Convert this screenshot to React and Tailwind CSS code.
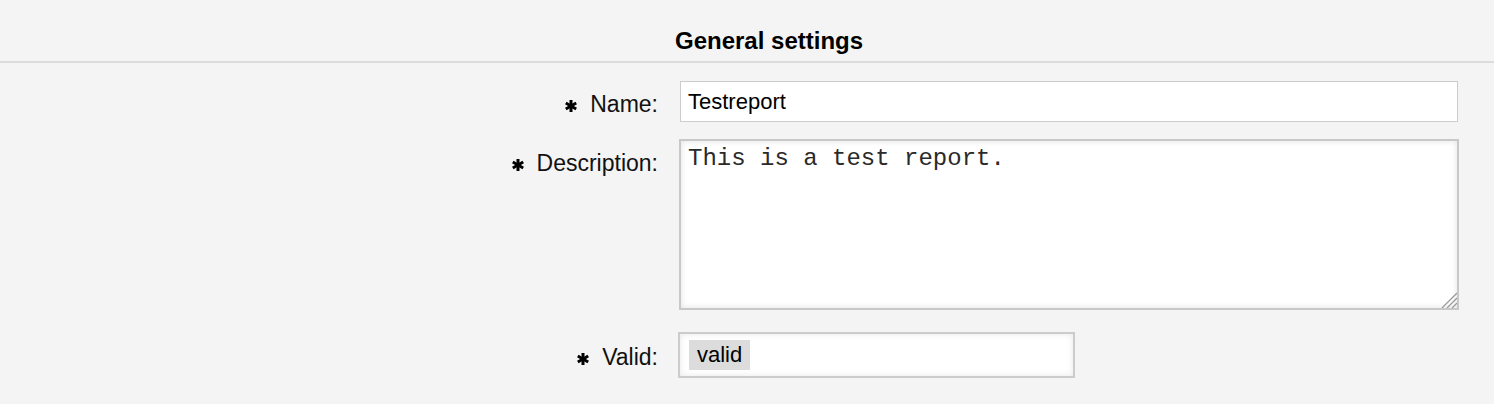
import React from 'react'

function Req() {
  return (
    <svg
      viewBox="0 0 12 12"
      className="mr-[13px] inline-block h-[12px] w-[12px] align-baseline"
      aria-hidden="true"
    >
      <g stroke="#000" strokeWidth="3" strokeLinecap="butt">
        <line x1="6" y1="0" x2="6" y2="12" />
        <line x1="0.8" y1="3" x2="11.2" y2="9" />
        <line x1="0.8" y1="9" x2="11.2" y2="3" />
      </g>
    </svg>
  )
}

function Label({ children, className = '' }) {
  return (
    <div className={`w-[658px] shrink-0 text-right text-[23px] leading-[28px] text-[#111] ${className}`}>
      <Req />
      {children}
    </div>
  )
}

function ResizeGrip() {
  return (
    <svg viewBox="0 0 18 18" className="pointer-events-none absolute bottom-[2px] right-[2px] h-[18px] w-[18px]" aria-hidden="true">
      <g stroke="#9a9a9a" strokeWidth="1.3">
        <line x1="3" y1="18" x2="18" y2="3" />
        <line x1="8" y1="18" x2="18" y2="8" />
        <line x1="13" y1="18" x2="18" y2="13" />
      </g>
    </svg>
  )
}

export default function App() {
  return (
    <div className="min-h-screen bg-[#f4f4f4] font-['Liberation_Sans',Arial,sans-serif] text-black">
      <div className="border-b-2 border-[#dcdcdc] pb-[6px] pl-[675px] pt-[27px] text-[24px] font-bold leading-[28px]">
        General settings
      </div>

      <div className="mt-[18px] flex gap-[22px]">
        <Label className="pt-[9px]">Name:</Label>
        <input
          readOnly
          value="Testreport"
          className="h-[41px] w-[778px] border border-[#cccccc] bg-white px-[7px] text-[22px] text-black outline-none"
        />
      </div>

      <div className="mt-[17px] flex gap-[21px]">
        <Label className="pt-[10px]">Description:</Label>
        <div className="relative h-[171px] w-[780px]">
          <textarea
            readOnly
            defaultValue="This is a test report."
            className="block h-full w-full resize-none border-2 border-[#c8c8c8] bg-white px-[7px] pt-[4px] font-['Liberation_Mono','Courier_New',monospace] text-[24px] leading-[28px] text-[#2a2a2a] shadow-[inset_0_0_6px_rgba(0,0,0,0.12)] outline-none"
          />
          <ResizeGrip />
        </div>
      </div>

      <div className="mt-[22px] flex gap-[20px]">
        <Label className="pt-[11px]">Valid:</Label>
        <div className="h-[46px] w-[397px] border-2 border-[#cccccc] bg-white pl-[9px] pt-[6px] shadow-[inset_0_0_6px_rgba(0,0,0,0.1)]">
          <span className="inline-block h-[30px] bg-[#dcdcdc] px-[8px] text-[22px] leading-[30px] text-black">
            valid
          </span>
        </div>
      </div>
    </div>
  )
}
